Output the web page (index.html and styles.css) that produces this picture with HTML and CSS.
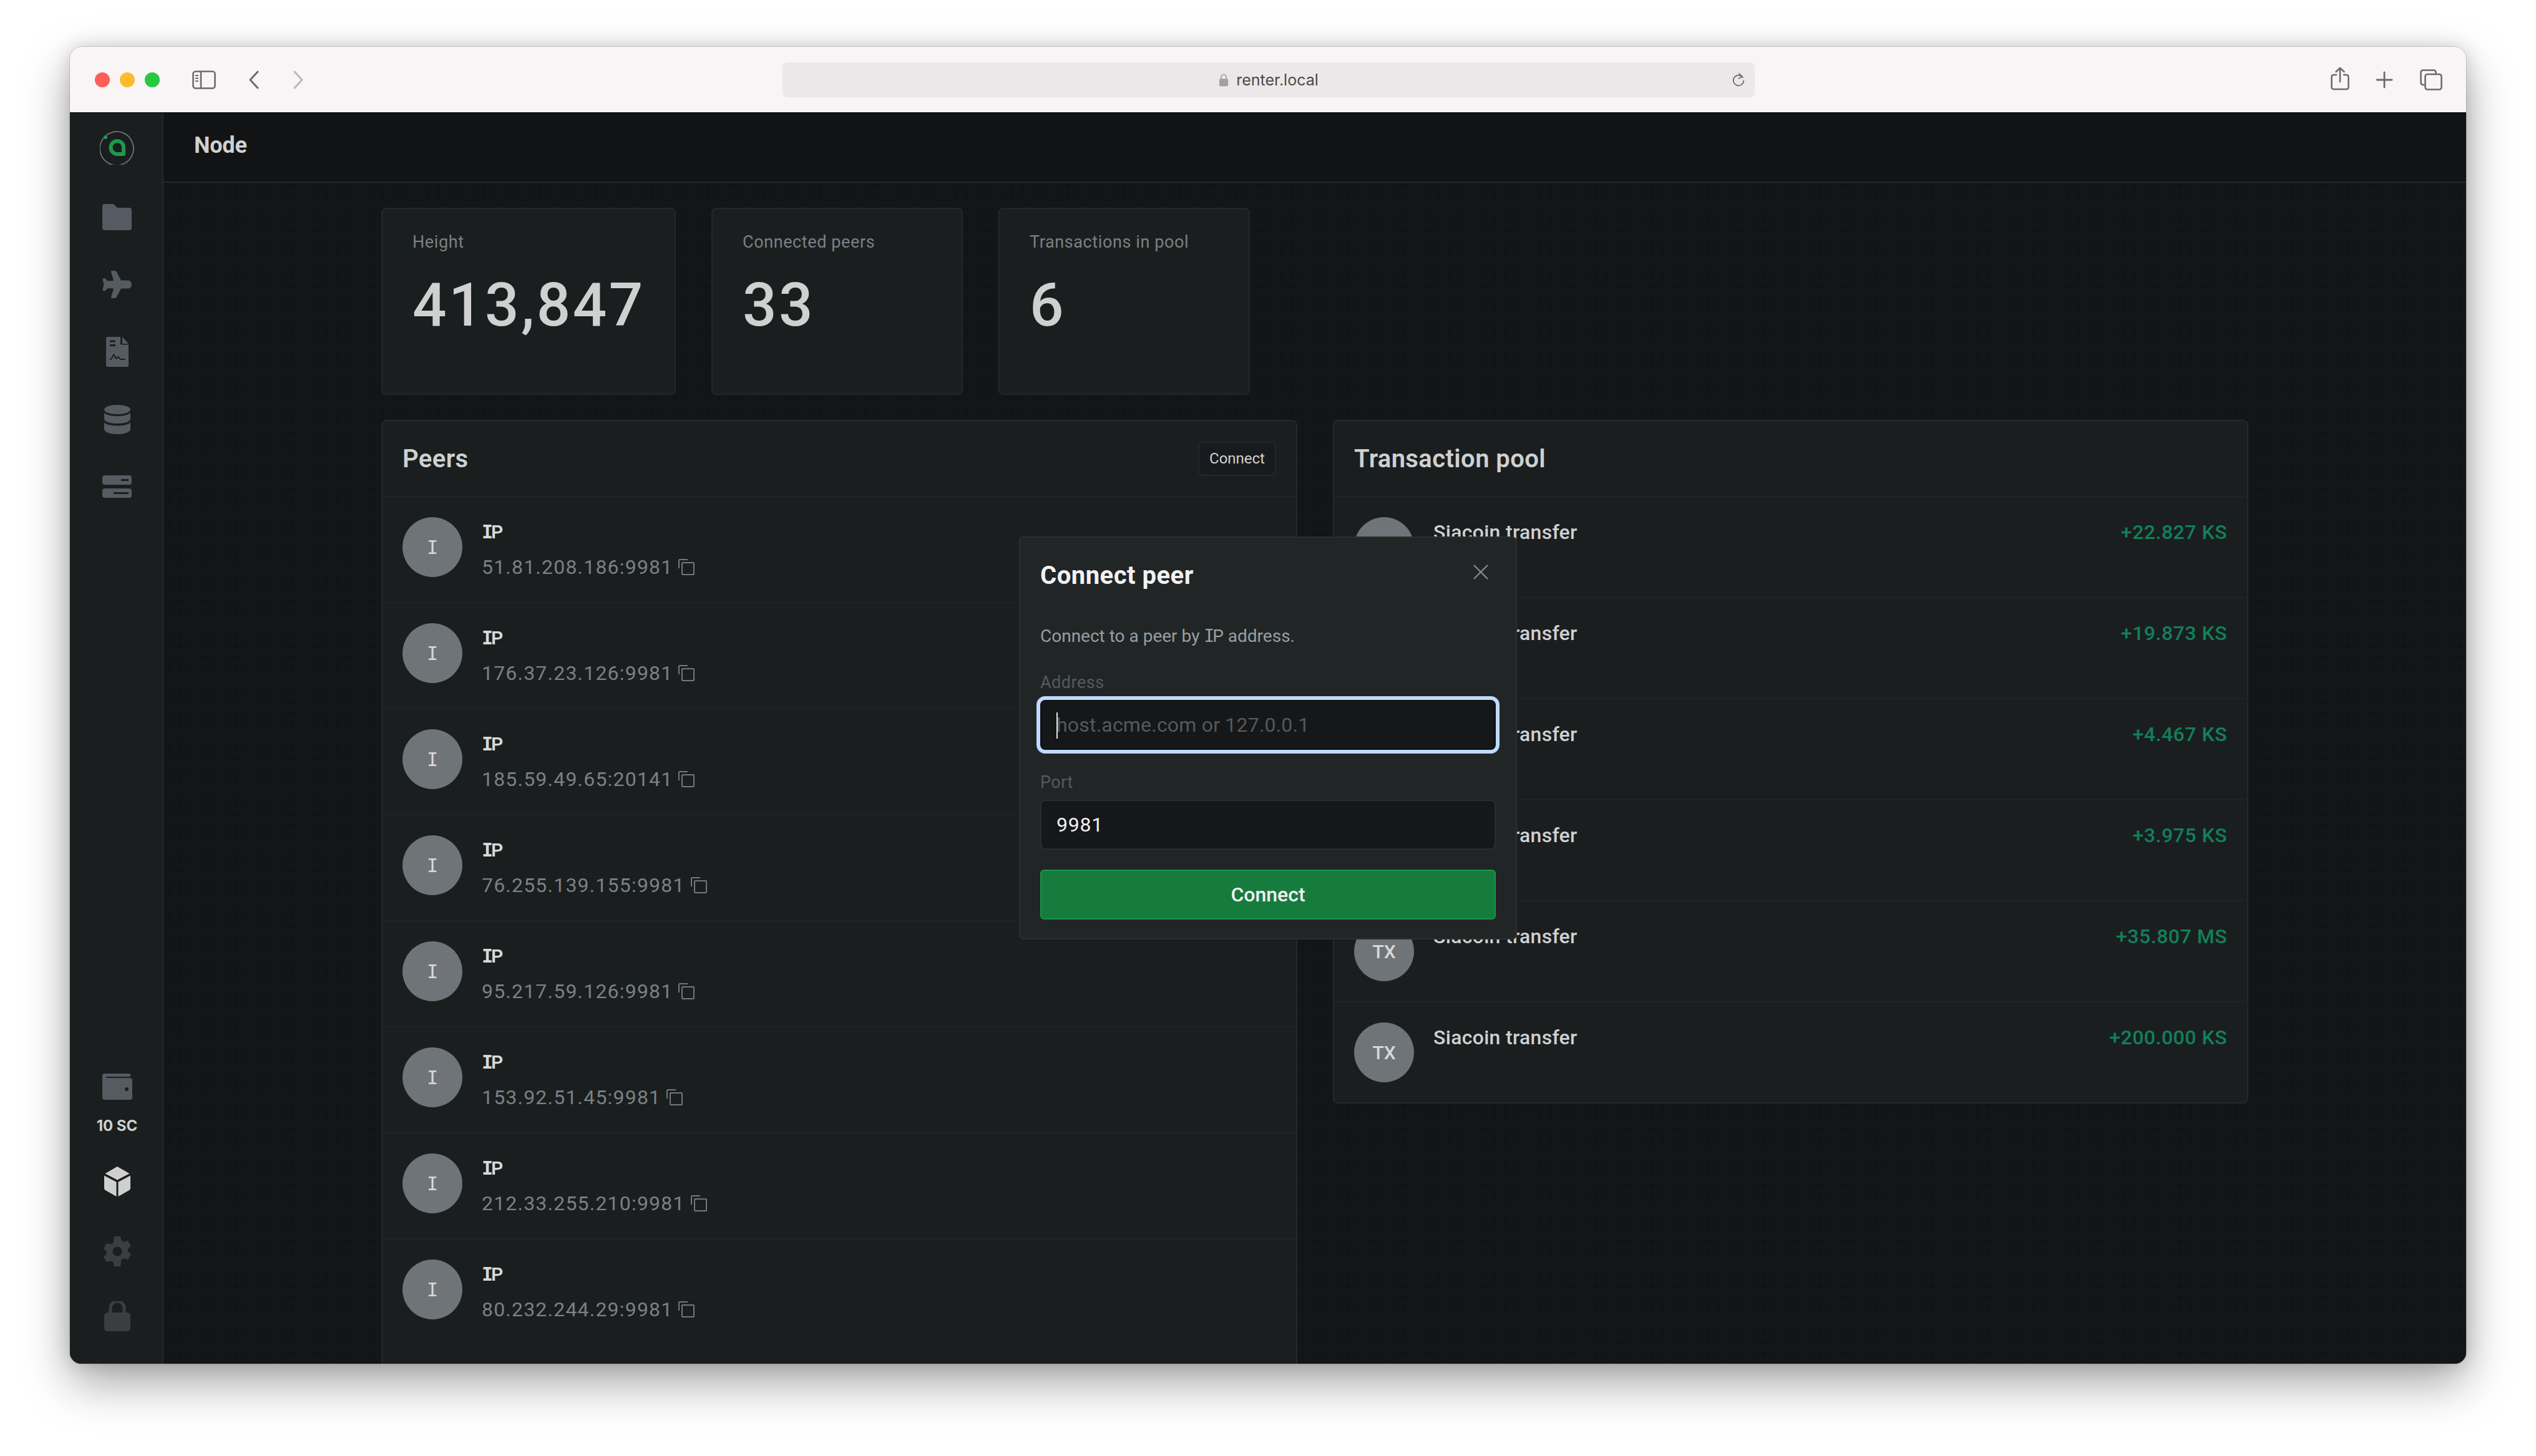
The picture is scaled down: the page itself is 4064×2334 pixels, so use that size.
FILE: index.html
```html
<!DOCTYPE html>
<html lang="en">
<head>
    <meta charset="UTF-8">
    <title>Node</title>
    <link rel="stylesheet" href="styles.css">
</head>
<body>
<div class="window">
    <div class="toolbar">
        <div class="tool-left">
            <span class="light red"></span><span class="light yellow"></span><span class="light green"></span>
            <svg class="side-toggle" viewBox="0 0 38 30" fill="none" stroke="#6e696b" stroke-width="2.6"><rect x="1.5" y="1.5" width="35" height="27" rx="4"/><path d="M14 1.5v27"/><path d="M5 8h5M5 12.5h5M5 17h5" stroke-width="2"/></svg>
            <svg class="chev back" viewBox="0 0 18 30" fill="none" stroke="#6e696b" stroke-width="3" stroke-linecap="round" stroke-linejoin="round"><path d="M15 2 3 15l12 13"/></svg>
            <svg class="chev fwd" viewBox="0 0 18 30" fill="none" stroke="#bbb7b9" stroke-width="3" stroke-linecap="round" stroke-linejoin="round"><path d="M3 2l12 13L3 28"/></svg>
        </div>
        <div class="url-bar">
            <div class="url">
                <svg class="url-lock" viewBox="0 0 18 24"><path d="M4.5 10V6.5a4.5 4.5 0 0 1 9 0V10" fill="none" stroke="#a3a0a1" stroke-width="2"/><rect x="1" y="9.5" width="16" height="13.5" rx="2.5" fill="#a3a0a1"/></svg>
                <span>renter.local</span>
            </div>
            <svg class="reload" viewBox="0 0 24 26" fill="none" stroke="#6e696b" stroke-width="1.9" stroke-linecap="round" stroke-linejoin="round"><path d="M19.5 8.5A9 9 0 1 0 21 14"/><path d="M13 1.5l5.5 5-6 3.5"/></svg>
        </div>
        <div class="tool-right">
            <svg class="t-share" viewBox="0 0 30 38" fill="none" stroke="#6e696b" stroke-width="2.6" stroke-linecap="round" stroke-linejoin="round"><path d="M9 13H4.5a3 3 0 0 0-3 3v17a3 3 0 0 0 3 3h21a3 3 0 0 0 3-3V16a3 3 0 0 0-3-3H21"/><path d="M15 24V2M8.500 8 15 2l6.500 6"/></svg>
            <svg class="t-plus" viewBox="0 0 28 28" fill="none" stroke="#6e696b" stroke-width="2.8" stroke-linecap="round"><path d="M14 2v24M2 14h24"/></svg>
            <svg class="t-tabs" viewBox="0 0 36 34" fill="none" stroke="#6e696b" stroke-width="2.6"><path d="M7 25H5a3.500 3.500 0 0 1-3.500-3.500V5A3.500 3.500 0 0 1 5 1.500h17A3.500 3.500 0 0 1 25.500 5v3"/><rect x="8.500" y="8" width="26" height="24.500" rx="3.500"/></svg>
        </div>
    </div>

    <div class="app">
        <nav class="sidebar">
            <svg class="logo" viewBox="0 0 56 56" fill="none">
                <path d="M10 9A27 27 0 1 1 6 13" stroke="#6f7478" stroke-width="1.8"/>
                <circle cx="9" cy="12" r="3" fill="#1c9a4b"/>
                <path d="M28 18a10 10 0 0 1 10 10v11H28a10.500 10.500 0 0 1 0-21z" stroke="#1c9a4b" stroke-width="6" stroke-linejoin="round"/>
            </svg>
            <svg class="nav-icon nav-folder" viewBox="0 0 47 42" fill="#565b62"><path d="M4 0h12c1.500 0 2.500.5 3.500 1.500L24 6h19a4 4 0 0 1 4 4v28a4 4 0 0 1-4 4H4a4 4 0 0 1-4-4V4a4 4 0 0 1 4-4z"/></svg>
            <svg class="nav-icon nav-plane" viewBox="0 0 47 44" fill="#565b62"><path d="M15 0h5.500c.8 0 1.500.4 2 1.200L30 15.500h11.500c3 0 5.500 3 5.500 6.500s-2.500 6.500-5.500 6.500H30l-7.500 14.300c-.5.800-1.200 1.200-2 1.200H15c-.8 0-1.300-.8-1-1.600L18 28.500l-9.500-.5-3 3.500c-.5.500-1 .8-1.700.8H1.500c-.8 0-1.300-.7-1.100-1.500L2.500 22 .4 13.700C.2 12.900.700 12.200 1.500 12.200h2.300c.7 0 1.200.3 1.700.8l3 3.500 9.500-.5L14 1.600C13.700.8 14.200 0 15 0z"/></svg>
            <svg class="nav-icon nav-doc" viewBox="0 0 36 48" fill="#565b62" fill-rule="evenodd"><path d="M2.500 0H23v11a1.500 1.500 0 0 0 1.500 1.500H36v33a2.500 2.500 0 0 1-2.500 2.500h-31A2.500 2.500 0 0 1 0 45.500v-43A2.500 2.500 0 0 1 2.500 0zM6 5.500v3h9v-3zM6 12v3h9v-3z"/><path d="M26 0l10 11H26z"/><path d="M6.500 36c2 0 2.500-1 3.500-3.500s1.500-4 2.500-4 1.500 3 2.500 5 1.500 1.500 2.500 0 1.500-2 2.500-1 1.500 3.500 3.500 3.500H30" fill="none" stroke="#1a1e1f" stroke-width="2" stroke-linecap="round"/></svg>
            <svg class="nav-icon nav-db" viewBox="0 0 42 47" fill="#565b62"><path d="M21 0c11.500 0 21 3 21 7.500S32.500 15 21 15 0 12 0 7.500 9.500 0 21 0z"/><path d="M0 12.500C3 16.500 12 18 21 18s18-1.500 21-5.500v10C42 27 32.500 30 21 30S0 27 0 22.500z"/><path d="M0 28c3 4 12 5.500 21 5.500S39 32 42 28v11c0 4.500-9.500 8-21 8S0 43.500 0 39z"/></svg>
            <svg class="nav-icon nav-server" viewBox="0 0 47 36" fill="#565b62" fill-rule="evenodd"><path d="M4 0h39a4 4 0 0 1 4 4v7a4 4 0 0 1-4 4H4a4 4 0 0 1-4-4V4a4 4 0 0 1 4-4zm26 6v3h12V6z"/><path d="M4 21h39a4 4 0 0 1 4 4v7a4 4 0 0 1-4 4H4a4 4 0 0 1-4-4v-7a4 4 0 0 1 4-4zm14 6v3h24v-3z"/></svg>

            <div class="nav-bottom">
                <svg class="nav-icon wallet" viewBox="0 0 48 42" fill="#565b62" fill-rule="evenodd"><path d="M4 0h39c1.500 0 2.500 1 2.500 2.500S44.500 5 43 5H6v2h38a4 4 0 0 1 4 4v27a4 4 0 0 1-4 4H4a4 4 0 0 1-4-4V4a4 4 0 0 1 4-4zm35 22a3 3 0 1 0 0 6 3 3 0 0 0 0-6z"/></svg>
                <div class="balance">10 SC</div>
                <svg class="nav-icon box" viewBox="0 0 42 48" fill="#d0d0d0"><path d="M21 0l19.500 11.200L21 21.500 1.500 11.200 20 .5z"/><path d="M0 14.500l19.500 10.300V48L2 38c-1.300-.7-2-1.800-2-3.200z"/><path d="M42 14.500v20.300c0 1.400-.7 2.500-2 3.200L22.500 48V24.800z"/></svg>
                <svg class="nav-icon gear" viewBox="0 0 46 48" fill="#3a3e41" fill-rule="evenodd"><path d="M18 0h10l1.500 6.500 4 2.300 6.400-2 5 8.700-4.900 4.500v4l4.900 4.500-5 8.700-6.400-2-4 2.300L28 48H18l-1.500-6.500-4-2.300-6.400 2-5-8.700L6 28v-4l-4.900-4.500 5-8.700 6.400 2 4-2.300zm5 16.500a7.500 7.500 0 1 0 0 15 7.500 7.500 0 0 0 0-15z"/></svg>
                <svg class="nav-icon lock" viewBox="0 0 42 48" fill="#3a3e41"><path d="M10 20v-9a11 11 0 0 1 22 0v9" fill="none" stroke="#3a3e41" stroke-width="5"/><rect y="18" width="42" height="30" rx="5"/></svg>
            </div>
        </nav>

        <main class="main">
            <header class="page-head">Node</header>
            <div class="content">
                <div class="stats">
                    <div class="stat stat-height"><div class="stat-label">Height</div><div class="stat-value">413,847</div></div>
                    <div class="stat"><div class="stat-label">Connected peers</div><div class="stat-value">33</div></div>
                    <div class="stat"><div class="stat-label">Transactions in pool</div><div class="stat-value">6</div></div>
                </div>
                <div class="panels">
                    <section class="panel peers">
                        <div class="panel-head">
                            <h2>Peers</h2>
                            <button class="small-btn">Connect</button>
                        </div>
                        <div class="peer"><div class="avatar slab">I</div><div><div class="peer-name"><span class="slab">I</span>P</div><div class="peer-addr">51.81.208.186:9981<svg class="copy" viewBox="0 0 26 26"><use href="#copy"/></svg></div></div></div>
                        <div class="peer"><div class="avatar slab">I</div><div><div class="peer-name"><span class="slab">I</span>P</div><div class="peer-addr">176.37.23.126:9981<svg class="copy" viewBox="0 0 26 26"><use href="#copy"/></svg></div></div></div>
                        <div class="peer"><div class="avatar slab">I</div><div><div class="peer-name"><span class="slab">I</span>P</div><div class="peer-addr">185.59.49.65:20141<svg class="copy" viewBox="0 0 26 26"><use href="#copy"/></svg></div></div></div>
                        <div class="peer"><div class="avatar slab">I</div><div><div class="peer-name"><span class="slab">I</span>P</div><div class="peer-addr">76.255.139.155:9981<svg class="copy" viewBox="0 0 26 26"><use href="#copy"/></svg></div></div></div>
                        <div class="peer"><div class="avatar slab">I</div><div><div class="peer-name"><span class="slab">I</span>P</div><div class="peer-addr">95.217.59.126:9981<svg class="copy" viewBox="0 0 26 26"><use href="#copy"/></svg></div></div></div>
                        <div class="peer"><div class="avatar slab">I</div><div><div class="peer-name"><span class="slab">I</span>P</div><div class="peer-addr">153.92.51.45:9981<svg class="copy" viewBox="0 0 26 26"><use href="#copy"/></svg></div></div></div>
                        <div class="peer"><div class="avatar slab">I</div><div><div class="peer-name"><span class="slab">I</span>P</div><div class="peer-addr">212.33.255.210:9981<svg class="copy" viewBox="0 0 26 26"><use href="#copy"/></svg></div></div></div>
                        <div class="peer"><div class="avatar slab">I</div><div><div class="peer-name"><span class="slab">I</span>P</div><div class="peer-addr">80.232.244.29:9981<svg class="copy" viewBox="0 0 26 26"><use href="#copy"/></svg></div></div></div>
                    </section>
                    <section class="panel pool">
                        <div class="panel-head"><h2>Transaction pool</h2></div>
                        <div class="tx"><div class="avatar">TX</div><div class="tx-name">Siacoin transfer</div><div class="tx-amount">+22.827 KS</div></div>
                        <div class="tx"><div class="avatar">TX</div><div class="tx-name">Siacoin transfer</div><div class="tx-amount">+19.873 KS</div></div>
                        <div class="tx"><div class="avatar">TX</div><div class="tx-name">Siacoin transfer</div><div class="tx-amount">+4.467 KS</div></div>
                        <div class="tx"><div class="avatar">TX</div><div class="tx-name">Siacoin transfer</div><div class="tx-amount">+3.975 KS</div></div>
                        <div class="tx"><div class="avatar">TX</div><div class="tx-name">Siacoin transfer</div><div class="tx-amount">+35.807 MS</div></div>
                        <div class="tx"><div class="avatar">TX</div><div class="tx-name">Siacoin transfer</div><div class="tx-amount">+200.000 KS</div></div>
                    </section>
                </div>
            </div>
        </main>
    </div>

    <div class="modal">
        <div class="modal-head">
            <h3>Connect peer</h3>
            <svg class="close" viewBox="0 0 24 24" fill="none" stroke="#8a8e90" stroke-width="2.200"><path d="M1 1l22 22M23 1 1 23"/></svg>
        </div>
        <p class="modal-desc">Connect to a peer by <span class="slab">I</span>P address.</p>
        <label class="field-label address-label">Address</label>
        <div class="input focused"><span class="caret"></span><span class="placeholder">host.acme.com or 127.0.0.1</span></div>
        <label class="field-label port-label">Port</label>
        <div class="input">9981</div>
        <button class="primary">Connect</button>
    </div>
</div>

<svg class="defs" width="0" height="0">
    <symbol id="copy" viewBox="0 0 26 26">
        <path d="M1 15V2.500A1.500 1.500 0 0 1 2.500 1H15" fill="none" stroke="#73787c" stroke-width="2"/>
        <rect x="6" y="6" width="19" height="19" rx="1" fill="none" stroke="#73787c" stroke-width="2"/>
    </symbol>
</svg>
</body>
</html>
```

FILE: styles.css
```css
html, body {
    margin: 0;
    padding: 0;
    background: #fff;
}
body {
    width: 4064px;
    height: 2334px;
    padding: 75px 112px 0;
    box-sizing: border-box;
    font-family: Roboto, "Noto Sans", sans-serif;
    overflow: hidden;
}
.defs {
    position: absolute;
}
.slab {
    font-family: "DejaVu Sans Mono", monospace;
    font-weight: 700;
}

.window {
    position: relative;
    width: 3840px;
    height: 2111px;
    border-radius: 20px 20px 18px 18px;
    overflow: hidden;
    display: flex;
    flex-direction: column;
    outline: 1px solid rgba(0, 0, 0, .12);
    box-shadow: 0 30px 75px rgba(0, 0, 0, .36), 0 0 28px rgba(0, 0, 0, .14);
}

/* browser toolbar */
.toolbar {
    height: 105px;
    flex: none;
    background: #f9f4f6;
    display: grid;
    grid-template-columns: 1142px 1558px 1fr;
    align-items: center;
}
.tool-left {
    display: flex;
    align-items: center;
    padding-left: 40px;
    margin-top: 1px;
}
.light {
    width: 24px;
    height: 24px;
    border-radius: 50%;
    margin-right: 16px;
}
.red { background: #fd5f57; }
.yellow { background: #febb2e; }
.green { background: #28c83f; }
.side-toggle {
    width: 38px;
    height: 30px;
    margin-left: 36px;
}
.chev {
    width: 18px;
    height: 30px;
}
.back { margin-left: 52px; }
.fwd { margin-left: 53px; }
.url-bar {
    height: 56px;
    background: #ece8ea;
    border-radius: 8px;
    position: relative;
    display: flex;
    align-items: center;
    justify-content: center;
    margin-top: 1px;
}
.url {
    display: flex;
    align-items: center;
    gap: 12px;
    font-family: Inter, sans-serif;
    font-size: 25px;
    color: #4a4a4c;
}
.url-lock {
    width: 16px;
    height: 23px;
}
.reload {
    position: absolute;
    right: 15px;
    top: 16px;
    width: 22px;
    height: 25px;
}
.tool-right {
    display: flex;
    align-items: center;
    padding-left: 923px;
}
.t-share { width: 30px; height: 38px; margin-top: -4px; }
.t-plus { width: 28px; height: 28px; margin-left: 42px; }
.t-tabs { width: 36px; height: 34px; margin-left: 43px; }

/* app */
.app {
    flex: 1;
    display: flex;
    min-height: 0;
    background: #131517;
    border-top: 1px solid #050505;
}
.sidebar {
    width: 145px;
    flex: none;
    background: #1a1e1f;
    border-right: 2px solid #24282a;
    display: flex;
    flex-direction: column;
    align-items: center;
    padding: 27px 0 0 3px;
}
.logo {
    width: 56px;
    height: 56px;
    flex: none;
}
.nav-icon {
    flex: none;
    display: block;
}
.nav-folder { width: 47px; height: 42px; margin-top: 63px; }
.nav-plane { width: 47px; height: 44px; margin-top: 65px; }
.nav-doc { width: 36px; height: 48px; margin-top: 62px; }
.nav-db { width: 42px; height: 47px; margin-top: 61px; }
.nav-server { width: 47px; height: 36px; margin-top: 66px; }
.nav-bottom {
    margin-top: auto;
    padding-bottom: 52px;
    display: flex;
    flex-direction: column;
    align-items: center;
}
.wallet { width: 48px; height: 42px; }
.balance {
    font-family: Inter, sans-serif;
    font-size: 24px;
    font-weight: 700;
    color: #d0d0d0;
    margin-top: 28px;
    line-height: 28px;
}
.box { width: 42px; height: 48px; margin-top: 51px; }
.gear { width: 46px; height: 48px; margin-top: 64px; }
.lock { width: 42px; height: 48px; margin-top: 56px; }

.main {
    flex: 1;
    min-width: 0;
    display: flex;
    flex-direction: column;
    background-color: #131517;
    background-image: radial-gradient(circle, #101214 2px, transparent 4px);
    background-size: 18px 18px;
    overflow: hidden;
}
.page-head {
    height: 112px;
    flex: none;
    box-sizing: border-box;
    background: #111315;
    border-bottom: 2px solid #24282a;
    padding: 29px 0 0 49px;
    font-size: 36px;
    line-height: 46px;
    font-weight: 700;
    color: #d0d0d0;
    letter-spacing: -.2px;
}
.content {
    padding: 40px 0 0 349px;
    width: 2992px;
}

.stats {
    display: flex;
    gap: 57px;
}
.stat {
    width: 403px;
    height: 300px;
    box-sizing: border-box;
    background: #1a1e1f;
    border: 2px solid #24282a;
    border-radius: 8px;
    padding: 35px 48px;
}
.stat-height { width: 472px; }
.stat-label {
    font-size: 27px;
    line-height: 36px;
    color: #7c8084;
    letter-spacing: .6px;
}
.stat-value {
    font-size: 96px;
    line-height: 110px;
    margin-top: 28px;
    font-weight: 500;
    color: #d0d0d0;
    letter-spacing: 3.4px;
}

.panels {
    display: grid;
    grid-template-columns: 1468px 1467px;
    column-gap: 57px;
    margin-top: 40px;
    align-items: start;
}
.panel {
    background: #1a1e1f;
    border: 2px solid #24282a;
    border-radius: 8px;
    box-sizing: border-box;
}
.peers { padding-bottom: 200px; }
.panel-head {
    height: 120px;
    box-sizing: border-box;
    padding: 0 32px;
    display: flex;
    align-items: center;
    justify-content: space-between;
}
.panel-head h2 {
    margin: 0;
    font-size: 40px;
    font-weight: 600;
    color: #d0d0d0;
    letter-spacing: .4px;
}
.small-btn {
    width: 125px;
    height: 55px;
    padding: 0;
    background: #181b1d;
    border: 2px solid #24282a;
    border-radius: 8px;
    font-family: inherit;
    font-size: 24px;
    color: #d0d0d0;
}

.peer {
    height: 170px;
    box-sizing: border-box;
    border-top: 2px solid #1f2325;
    display: flex;
    padding: 32px 32px 0;
    gap: 31px;
}
.avatar {
    width: 96px;
    height: 96px;
    flex: none;
    border-radius: 50%;
    background: #6f7478;
    color: #d8d8d8;
    display: flex;
    align-items: center;
    justify-content: center;
    font-size: 30px;
    font-weight: 500;
}
.peer-name {
    font-size: 30px;
    font-weight: 600;
    line-height: 40px;
    color: #d8d8d8;
    margin-top: 4px;
}
.peer-name .slab { margin-right: -3px; }
.peer-addr {
    display: flex;
    align-items: center;
    margin-top: 16px;
    font-size: 32px;
    line-height: 40px;
    color: #7c8084;
    letter-spacing: 1.2px;
}
.copy {
    width: 26px;
    height: 26px;
    margin-left: 9px;
}

.tx {
    height: 162px;
    box-sizing: border-box;
    border-top: 2px solid #1f2325;
    display: flex;
    padding: 32px 32px 0;
    gap: 31px;
}
.tx-name {
    flex: 1;
    font-size: 32px;
    line-height: 40px;
    font-weight: 500;
    color: #d0d0d0;
    margin-top: 4px;
    letter-spacing: .3px;
}
.tx-amount {
    font-size: 32px;
    line-height: 40px;
    font-weight: 500;
    color: #11805a;
    margin-top: 4px;
    letter-spacing: .5px;
}

/* dialog, lies over the panels */
.modal {
    position: absolute;
    left: 1521px;
    top: 785px;
    width: 798px;
    height: 646px;
    box-sizing: border-box;
    background: #212526;
    border: 2px solid #2b2f31;
    border-radius: 8px;
    padding: 0 32px;
}
.modal-head {
    height: 120px;
    display: flex;
    justify-content: space-between;
    align-items: center;
}
.modal-head h3 {
    margin: 0;
    font-size: 40px;
    font-weight: 700;
    color: #f2f2f2;
    letter-spacing: .5px;
}
.close {
    width: 24px;
    height: 24px;
    margin: -10px 12px 0 0;
}
.modal-desc {
    margin: 20px 0 0;
    font-size: 28px;
    line-height: 36px;
    color: #9a9ea1;
}
.modal-desc .slab { font-weight: 400; margin-right: -3px; }
.field-label {
    display: block;
    font-size: 27px;
    line-height: 34px;
    color: #55595c;
    letter-spacing: .5px;
}
.address-label { margin-top: 39px; }
.port-label { margin-top: 35px; }
.input {
    height: 80px;
    box-sizing: border-box;
    margin-top: 11px;
    background: #151719;
    border: 2px solid #2a2e30;
    border-radius: 8px;
    padding: 0 24px;
    display: flex;
    align-items: center;
    font-size: 32px;
    color: #f2f2f2;
    letter-spacing: .8px;
}
.focused {
    outline: 6px solid #bfdbfe;
    outline-offset: 0;
    border-color: #0d0f10;
    position: relative;
}
.caret {
    position: absolute;
    left: 24px;
    top: 18px;
    width: 2px;
    height: 42px;
    background: #e8e8e8;
}
.placeholder { color: #55595c; letter-spacing: .2px; }
.primary {
    display: block;
    width: 100%;
    height: 80px;
    margin-top: 32px;
    background: #167c3e;
    border: 2px solid #1a9448;
    border-radius: 6px;
    font-family: inherit;
    font-size: 32px;
    font-weight: 500;
    color: #f2f2f2;
}
```
